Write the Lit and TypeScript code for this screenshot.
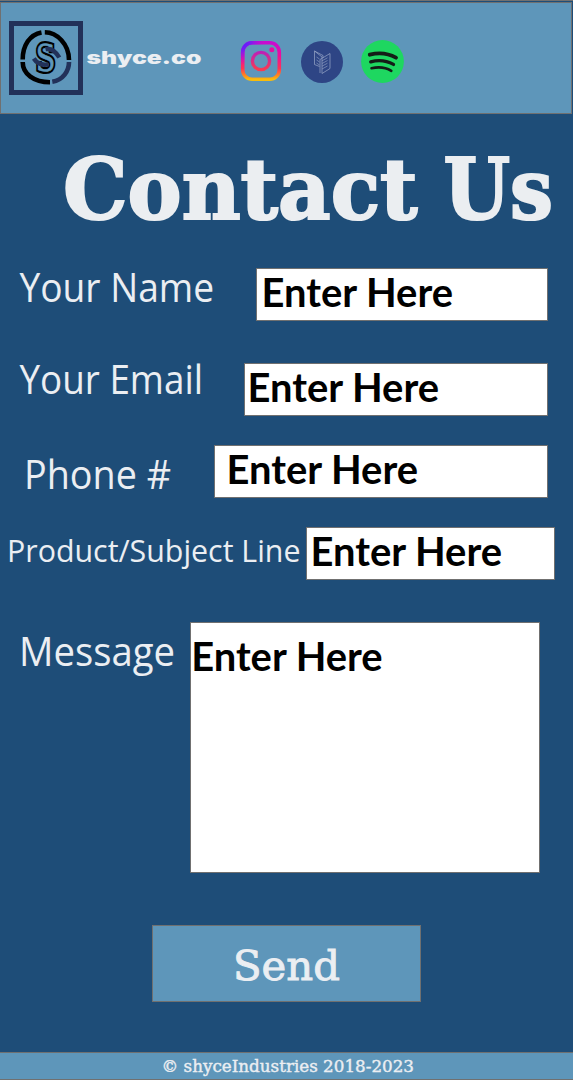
import { LitElement, html, svg, css } from "lit";
import { customElement } from "lit/decorators.js";

interface Field {
  label: string;
  kind: string;
  labelX: number;
  labelY: number;
  labelLength: number;
  size: number;
  left: number;
  textX: number;
  textY: number;
}

const FIELDS: Field[] = [
  { label: "Your Name", kind: "name", labelX: 19.5, labelY: 34, labelLength: 194.5, size: 39.5, left: 255.5, textX: 5.5, textY: 39 },
  { label: "Your Email", kind: "email", labelX: 19.5, labelY: 31, labelLength: 183.5, size: 39.5, left: 244, textX: 3.5, textY: 39 },
  { label: "Phone #", kind: "phone", labelX: 24, labelY: 44, labelLength: 147, size: 39.5, left: 214, textX: 12.5, textY: 39 },
  { label: "Product/Subject Line", kind: "product", labelX: 7, labelY: 35, labelLength: 293.5, size: 31.7, left: 306, textX: 4.5, textY: 39 },
  { label: "Message", kind: "message", labelX: 19, labelY: 44, labelLength: 156, size: 39.5, left: 190, textX: 1.2, textY: 49 },
];

/** One line of text fitted to an exact advance width. */
const line = (text: string, x: number, y: number, length: number, size: number) =>
  svg`<text x=${x} y=${y} font-size=${size} textLength=${length} lengthAdjust="spacingAndGlyphs">${text}</text>`;

@customElement("app-root")
export class AppRoot extends LitElement {
  static styles = css`
    :host {
      display: flex;
      flex-direction: column;
      width: 573px;
      height: 1080px;
      box-sizing: border-box;
      background: #1e4d78;
    }
    * { box-sizing: border-box; }
    svg { display: block; overflow: visible; flex: none; }
    .top { height: 2px; flex: none; border-top: 1px solid #707070; }
    header {
      display: flex;
      height: 112px;
      flex: none;
      width: 572px;
      border: 1px solid #707070;
      background: #5e96ba;
      padding: 18px 0 0 8px;
    }
    .mark { width: 74px; height: 74px; border: 5px solid #223159; flex: none; }
    .brand { margin-left: 4px; fill: #ebeef2; font-family: Inter, "Liberation Sans", sans-serif; font-weight: 900; }
    .social { display: flex; gap: 18px; margin-left: 38px; padding-top: 18px; }
    .spotify { margin-left: -2px; }
    .s { font-family: "DejaVu Serif", serif; }
    .title { height: 154px; flex: none; margin: 0; fill: #ebeef1; stroke: #ebeef1; stroke-width: 2.2; font-family: "DejaVu Serif", serif; font-weight: 700; }
    .row { display: flex; height: 53px; }
    .name { margin-bottom: 42px; padding-right: 25px; }
    .email { margin-bottom: 29px; padding-right: 25px; }
    .phone { margin-bottom: 29px; padding-right: 25px; }
    .product { margin-bottom: 42px; padding-right: 18px; }
    .message { height: 251px; padding-right: 33px; }
    .label { fill: #ebeef2; font-family: "Open Sans", "Noto Sans", sans-serif; }
    .box { flex: 1; background: #fff; border: 1px solid #707070; }
    .entry { fill: #000; font-family: Lato, sans-serif; font-weight: 700; margin: -1px; }
    .send {
      display: block;
      width: 269px;
      height: 77px;
      margin: 52px 0 0 152px;
      padding: 0;
      background: #5e96ba;
      border: 1px solid #707070;
    }
    .slab { fill: #ebeef2; stroke: #ebeef2; stroke-width: 0.9; font-family: "DejaVu Serif", serif; }
    footer { margin-top: auto; height: 28px; flex: none; background: #5e96ba; border: solid #707070; border-width: 1px 0; }
    .fine { stroke-width: 0.4; }
  `;

  private logo() {
    return html`<div class="mark">
      <svg width="64" height="64" viewBox="14 26 64 64" fill="none">
        <g stroke="#000" stroke-width="4.6">
          <path d="M22.7 59.5C22.7 45 30 34.5 41.5 32.4" />
          <path d="M44.8 32.3C57 32.5 69 44 69 60" />
          <path d="M22.7 62C22.7 74 34 82.3 50 82.3" />
        </g>
        <path d="M69 62C69 71 63 80 52.3 81.8" stroke="#223159" stroke-width="4.6" />
        <text class="s" x="35.6" y="71" font-size="37" textLength="20" lengthAdjust="spacingAndGlyphs" fill="#000" stroke="#000" stroke-width="5">S</text>
        <text class="s" x="35.6" y="71" font-size="37" textLength="20" lengthAdjust="spacingAndGlyphs" fill="#5e96ba" stroke="#5e96ba" stroke-width=".5">S</text>
        <path d="M45.5 49.2C51.5 47.8 55.5 51 59.3 57.5M33.8 58.5C37 63.5 41 65.8 48.5 64.3" stroke="#223159" stroke-width="4.4" />
      </svg>
    </div>`;
  }

  private social() {
    return html`<div class="social">
      <svg width="42" height="44" viewBox="240 39 42 44" fill="none">
        <defs>
          <linearGradient id="ig" x1="0" y1="0" x2="0" y2="1">
            <stop offset="0" stop-color="#c80bd0" /><stop offset=".35" stop-color="#ef0c9c" />
            <stop offset=".7" stop-color="#ff3155" /><stop offset=".9" stop-color="#ff8a1c" /><stop offset="1" stop-color="#f9bc0b" />
          </linearGradient>
          <radialGradient id="igv" cx="0" cy="0" r=".62">
            <stop offset="0" stop-color="#5720ff" /><stop offset=".35" stop-color="#7a1bf4" /><stop offset="1" stop-color="#c80bd0" stop-opacity="0" />
          </radialGradient>
          <linearGradient id="igc" x1="0" y1="0" x2="0" y2="1">
            <stop offset="0" stop-color="#bd21b5" /><stop offset="1" stop-color="#f83a50" />
          </linearGradient>
        </defs>
        <rect x="242.7" y="42.7" width="36.6" height="36.6" rx="9.5" stroke="url(#ig)" stroke-width="3.6" />
        <rect x="242.7" y="42.7" width="36.6" height="36.6" rx="9.5" stroke="url(#igv)" stroke-width="3.6" />
        <circle cx="261" cy="61" r="8.6" stroke="url(#igc)" stroke-width="3.4" />
        <circle cx="271.8" cy="49.8" r="2.5" fill="#e50ca4" />
      </svg>
      <svg width="44" height="44" viewBox="300 39 44 44" fill="none">
        <circle cx="322" cy="62" r="21" fill="#2e4585" />
        <g stroke="#9aa7c8" stroke-width=".7">
          <path d="M319.5 66.5L314.5 64.5V51L322 57V73.5L330 68.5V53.5L320 59.5V73" />
          <path d="M314.5 51L323 55.5V58" />
          <path d="M316.5 57l3 2M316.5 60l3 2M316.5 63l3 2M322 60.8l5.5-3M322 63.5l5.5-3M322 66.2l5.5-3M322 69l5.5-3" stroke-width=".6" />
        </g>
      </svg>
      <svg class="spotify" width="44" height="44" viewBox="360 39 44 44" fill="none">
        <circle cx="382.5" cy="61.5" r="21.4" fill="#1ed760" />
        <g stroke="#141d17" stroke-linecap="round">
          <path d="M369.8 54.7C378 52.5 388 53.2 396 57.6" stroke-width="3.9" />
          <path d="M370.7 61.8C378 59.8 386.5 60.5 393.5 64.4" stroke-width="3.3" />
          <path d="M371.5 68.2C378 66.8 385.5 67.2 391.3 70.8" stroke-width="2.6" />
        </g>
      </svg>
    </div>`;
  }

  render() {
    return html`
      <div class="top"></div>
      <header>
        ${this.logo()}
        <svg class="brand" width="115" height="74">${line("shyce.co", -0.5, 43.4, 115, 17.6)}</svg>
        ${this.social()}
      </header>
      <h1 class="title">
        <svg width="573" height="154">${line("Contact", 63, 105, 354.5, 84.5)} ${line("Us", 443.5, 105, 109.5, 84.5)}</svg>
      </h1>
      ${FIELDS.map(
        (f) => html`<div class="row ${f.kind}">
          <svg class="label" width=${f.left} height="53">${line(f.label, f.labelX, f.labelY, f.labelLength, f.size)}</svg>
          <div class="box"><svg class="entry" width="200" height="50">${line("Enter Here", f.textX, f.textY, 191.5, 39.6)}</svg></div>
        </div>`,
      )}
      <button class="send"><svg class="slab" width="267" height="75">${line("Send", 80, 53.5, 107, 41)}</svg></button>
      <footer><svg class="slab fine" width="573" height="26">${line("© shyceIndustries 2018-2023", 161.5, 19.3, 252.5, 17)}</svg></footer>
    `;
  }
}
